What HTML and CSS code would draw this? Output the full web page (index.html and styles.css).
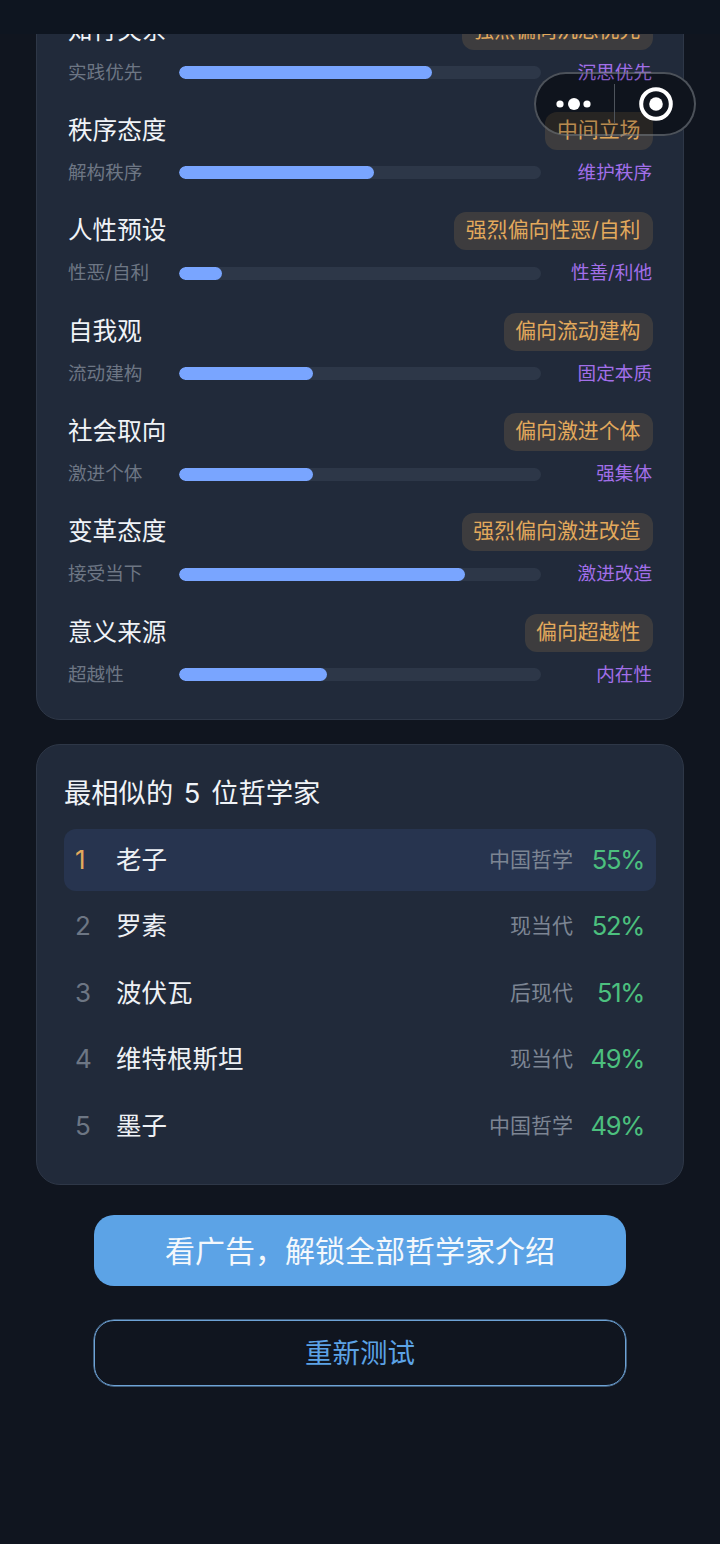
FILE: index.html
```html
<!DOCTYPE html>
<html lang="zh">
<head>
<meta charset="utf-8">
<title>测试结果</title>
<link rel="stylesheet" href="styles.css">
</head>
<body>
<div class="navbar"></div>
<div class="capsule-bg"></div>
<div class="capsule">
  <svg class="capsule-svg" width="162" height="64" viewBox="0 0 162 64">
    <circle cx="26" cy="32" r="3.6" fill="#fff"/>
    <circle cx="40" cy="32" r="6" fill="#fff"/>
    <circle cx="53" cy="32" r="3.6" fill="#fff"/>
    <rect x="80" y="12" width="1" height="40" fill="#4e545c"/>
    <circle cx="122" cy="32" r="14.8" fill="none" stroke="#fff" stroke-width="4"/>
    <circle cx="122" cy="32" r="6.8" fill="#fff"/>
  </svg>
</div>
<main class="page">
  <section class="card card-dims">
    <div class="dim">
      <div class="dim-head"><span class="dim-name">知行关系</span><span class="tag">强烈偏向沉思优先</span></div>
      <div class="dim-foot"><span class="left">实践优先</span><div class="track"><div class="fill" style="width:253px"></div></div><span class="right">沉思优先</span></div>
    </div>
    <div class="dim">
      <div class="dim-head"><span class="dim-name">秩序态度</span><span class="tag">中间立场</span></div>
      <div class="dim-foot"><span class="left">解构秩序</span><div class="track"><div class="fill" style="width:195px"></div></div><span class="right">维护秩序</span></div>
    </div>
    <div class="dim">
      <div class="dim-head"><span class="dim-name">人性预设</span><span class="tag">强烈偏向性恶/自利</span></div>
      <div class="dim-foot"><span class="left">性恶/自利</span><div class="track"><div class="fill" style="width:43px"></div></div><span class="right">性善/利他</span></div>
    </div>
    <div class="dim">
      <div class="dim-head"><span class="dim-name">自我观</span><span class="tag">偏向流动建构</span></div>
      <div class="dim-foot"><span class="left">流动建构</span><div class="track"><div class="fill" style="width:134px"></div></div><span class="right">固定本质</span></div>
    </div>
    <div class="dim">
      <div class="dim-head"><span class="dim-name">社会取向</span><span class="tag">偏向激进个体</span></div>
      <div class="dim-foot"><span class="left">激进个体</span><div class="track"><div class="fill" style="width:134px"></div></div><span class="right">强集体</span></div>
    </div>
    <div class="dim">
      <div class="dim-head"><span class="dim-name">变革态度</span><span class="tag">强烈偏向激进改造</span></div>
      <div class="dim-foot"><span class="left">接受当下</span><div class="track"><div class="fill" style="width:286px"></div></div><span class="right">激进改造</span></div>
    </div>
    <div class="dim">
      <div class="dim-head"><span class="dim-name">意义来源</span><span class="tag">偏向超越性</span></div>
      <div class="dim-foot"><span class="left">超越性</span><div class="track"><div class="fill" style="width:148px"></div></div><span class="right">内在性</span></div>
    </div>
  </section>

  <section class="card card-top">
    <h2 class="card-title">最相似的 5 位哲学家</h2>
    <ol class="rank-list">
      <li class="rank-row first"><span class="rank">1</span><span class="who">老子</span><span class="era">中国哲学</span><span class="pct">55%</span></li>
      <li class="rank-row"><span class="rank">2</span><span class="who">罗素</span><span class="era">现当代</span><span class="pct">52%</span></li>
      <li class="rank-row"><span class="rank">3</span><span class="who">波伏瓦</span><span class="era">后现代</span><span class="pct">51%</span></li>
      <li class="rank-row"><span class="rank">4</span><span class="who">维特根斯坦</span><span class="era">现当代</span><span class="pct">49%</span></li>
      <li class="rank-row"><span class="rank">5</span><span class="who">墨子</span><span class="era">中国哲学</span><span class="pct">49%</span></li>
    </ol>
  </section>

  <div class="actions">
    <button class="btn btn-primary">看广告，解锁全部哲学家介绍</button>
    <button class="btn btn-ghost">重新测试</button>
  </div>
</main>
</body>
</html>
```

FILE: styles.css
```css
* { box-sizing: border-box; }
html, body {
  margin: 0;
  padding: 0;
  height: 1544px;
  overflow: hidden;
  background: #10151f;
  font-family: Inter, "Noto Sans CJK SC", "Noto Sans", sans-serif;
}
.navbar {
  position: absolute;
  top: 0;
  left: 0;
  width: 720px;
  height: 34px;
  background: #0e1520;
  z-index: 4;
}
.capsule-bg,
.capsule {
  position: absolute;
  left: 534px;
  top: 72px;
  width: 162px;
  height: 64px;
  border-radius: 32px;
}
.capsule-bg {
  background: #10141d;
  z-index: 1;
}
.capsule {
  border: 2px solid rgba(128, 134, 142, 0.55);
  background: rgba(16, 20, 29, 0.2);
  z-index: 3;
}
.capsule-svg {
  display: block;
  margin: -2px;
}
.page {
  padding: 0 36px;
  margin-top: -19.5px;
}
.card {
  background: #212a3a;
  border: 1px solid #2e3747;
  border-radius: 24px;
}
.card-dims {
  padding: 30px 30px 30px 31px;
  height: 739.5px;
}
.dim {
  height: 100.4px;
}
.dim-head {
  display: flex;
  justify-content: space-between;
  align-items: flex-start;
  height: 38px;
  line-height: 36px;
}
.dim-name {
  font-size: 24.6px;
  color: #f0f3f7;
}
.tag {
  position: relative;
  z-index: 2;
  height: 38px;
  padding: 0 12.5px 0 11.5px;
  border-radius: 12px;
  background: rgba(227, 169, 92, 0.145);
  color: #e3a95c;
  font-size: 20.9px;
}
.dim-foot {
  display: flex;
  align-items: center;
  height: 28px;
  margin-top: 9px;
}
.left, .right {
  width: 111px;
  flex: none;
  align-self: flex-start;
  font-size: 18.6px;
  line-height: 26px;
}
.left { color: #6d7684; }
.right {
  position: relative;
  z-index: 2;
  color: #a26fe9;
  text-align: right;
}
.track {
  width: 362px;
  flex: none;
  height: 13px;
  border-radius: 7px;
  background: #2d3748;
  overflow: hidden;
}
.fill {
  height: 13px;
  border-radius: 7px;
  background: #79a5ff;
}
.card-top {
  margin-top: 24px;
  height: 441px;
  padding: 29px 27px 0;
}
.card-title {
  margin: 0 0 15px;
  font-size: 27.3px;
  font-weight: 400;
  line-height: 40px;
  word-spacing: 3px;
  color: #f0f3f7;
}
.rank-list {
  list-style: none;
  margin: 0;
  padding: 0;
}
.rank-row {
  display: flex;
  align-items: center;
  height: 62px;
  margin-bottom: 4.4px;
  padding: 0 12px 0 11px;
  border-radius: 12px;
  line-height: 30px;
}
.rank-row.first { background: #27344f; }
.rank {
  width: 41px;
  font-size: 26px;
  color: #6d7684;
}
.first .rank { color: #e3a95c; }
.who {
  flex: 1;
  font-size: 25.5px;
  color: #eef1f5;
}
.era {
  font-size: 21px;
  color: #7c8593;
}
.pct {
  width: 71px;
  text-align: right;
  font-size: 25.5px;
  letter-spacing: -1.3px;
  color: #4cc07e;
}
.actions {
  padding: 30px 58px 0;
  display: flex;
  flex-direction: column;
  gap: 34px;
}
.btn {
  display: block;
  width: 532px;
  font-family: inherit;
  font-weight: 400;
  line-height: 36px;
  border-radius: 20px;
}
.btn-primary {
  height: 71px;
  border: 0;
  background: #5ca3e6;
  color: #f4f8fc;
  font-size: 30px;
}
.btn-ghost {
  height: 65.5px;
  border: 1px solid #6ea3d6;
  box-shadow: 0 0 0 0.5px #6ea3d6;
  background: transparent;
  color: #5ca3e6;
  font-size: 27.5px;
}
```
